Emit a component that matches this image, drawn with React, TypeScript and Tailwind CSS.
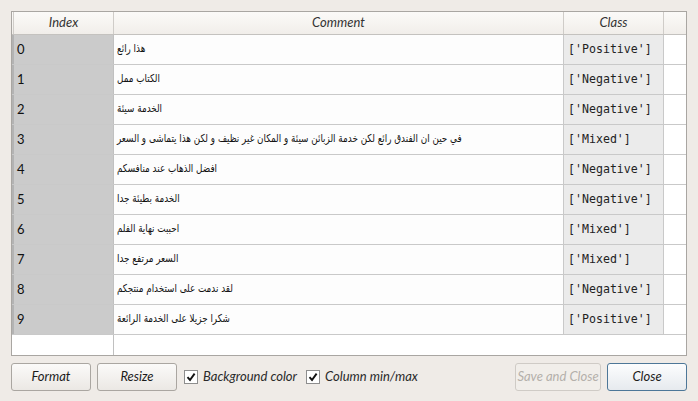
import React from 'react';

const rows = [
  { idx: '0', comment: 'هذا رائع', cls: "['Positive']" },
  { idx: '1', comment: 'الكتاب ممل', cls: "['Negative']" },
  { idx: '2', comment: 'الخدمة سيئة', cls: "['Negative']" },
  { idx: '3', comment: 'في حين ان الفندق رائع لكن خدمة الزبائن سيئة و المكان غير نظيف و لكن هذا يتماشى و السعر', cls: "['Mixed']" },
  { idx: '4', comment: 'افضل الذهاب عند منافسكم', cls: "['Negative']" },
  { idx: '5', comment: 'الخدمة بطيئة جدا', cls: "['Negative']" },
  { idx: '6', comment: 'احببت نهاية الفلم', cls: "['Mixed']" },
  { idx: '7', comment: 'السعر مرتفع جدا', cls: "['Mixed']" },
  { idx: '8', comment: 'لقد ندمت على استخدام منتجكم', cls: "['Negative']" },
  { idx: '9', comment: 'شكرا جزيلا على الخدمة الرائعة', cls: "['Positive']" },
];

const ui = "font-['Lato','Open_Sans',sans-serif]";

const Check = ({ label }: { label: string }) => (
  <label className="flex items-center gap-[5px]">
    <span className="flex h-[14px] w-[14px] items-center justify-center border border-[#8e8e8e] bg-white">
      <svg width="10" height="10" viewBox="0 0 10 10">
        <path d="M1.5 5.2 L4 8 L8.6 1.6" fill="none" stroke="#111" strokeWidth="1.9" />
      </svg>
    </span>
    <span className={`${ui} text-[13px] italic text-[#2a2a2a]`}>{label}</span>
  </label>
);

const Button = ({ children, disabled, primary, w }: { children: React.ReactNode; disabled?: boolean; primary?: boolean; w: string }) => (
  <button
    className={`${w} h-[28px] rounded-[3px] border ${ui} text-[13px] italic ${
      disabled
        ? 'border-[#cfcbc6] bg-[#f1eeea] text-[#b4b0ab]'
        : primary
        ? 'border-[#4d7798] bg-gradient-to-b from-[#fcfdfe] to-[#e6eaee] text-[#1c1c1c]'
        : 'border-[#aaa6a1] bg-gradient-to-b from-[#fbfaf9] to-[#ebe8e4] text-[#1c1c1c]'
    }`}
  >
    {children}
  </button>
);

export default function App() {
  return (
    <div className="h-[401px] w-[698px] bg-[#efebe7] px-[11px] pt-[11px]">
      <div className="flex h-[345px] flex-col border border-[#a9a6a2] bg-white">
        <div className="flex h-[23px] border-b border-[#c4c2bf] bg-gradient-to-b from-[#fbfaf8] to-[#f1eeea]">
          <div className="w-[2px] border-r border-[#cfccc8]" />
          {['Index', 'Comment', 'Class'].map((h, i) => (
            <div
              key={h}
              className={`${i === 1 ? 'w-[450px]' : 'w-[100px]'} flex items-center justify-center border-r border-[#cfccc8] ${ui} text-[13px] italic text-[#333]`}
            >
              {h}
            </div>
          ))}
          <div className="flex-1" />
        </div>
        {rows.map((r) => (
          <div key={r.idx} className="flex h-[30px] border-b border-[#c9c9c9]">
            <div className="w-[2px] bg-[#b3b3b3]" />
            <div className={`flex w-[100px] items-center border-r border-[#c0c0c0] bg-[#cbcbcb] pl-[3px] ${ui} text-[13px] text-[#111]`}>
              {r.idx}
            </div>
            <div className="flex w-[450px] items-center border-r border-[#c9c9c9] bg-[#fdfdfd] pl-[3px] font-['DejaVu_Sans',sans-serif] text-[11px] text-[#111]">
              <span dir="rtl" className="inline-block origin-left scale-x-[0.8] whitespace-nowrap">
                {r.comment}
              </span>
            </div>
            <div className="flex w-[100px] items-center border-r border-[#c9c9c9] bg-[#ebebeb] pl-[4px] font-['DejaVu_Sans_Mono',monospace] text-[11.6px] text-[#222]">
              {r.cls}
            </div>
            <div className="flex-1 bg-white" />
          </div>
        ))}
        <div className="flex flex-1">
          <div className="w-[102px] border-r border-[#c0c0c0]" />
        </div>
      </div>
      <div className="mt-[7px] flex items-center">
        <Button w="w-[80px]">Format</Button>
        <div className="ml-[6px]">
          <Button w="w-[80px]">Resize</Button>
        </div>
        <div className="ml-[7px]">
          <Check label="Background color" />
        </div>
        <div className="ml-[9px]">
          <Check label="Column min/max" />
        </div>
        <div className="ml-auto flex gap-[6px]">
          <Button w="w-[86px]" disabled>Save and Close</Button>
          <Button w="w-[80px]" primary>Close</Button>
        </div>
      </div>
    </div>
  );
}
